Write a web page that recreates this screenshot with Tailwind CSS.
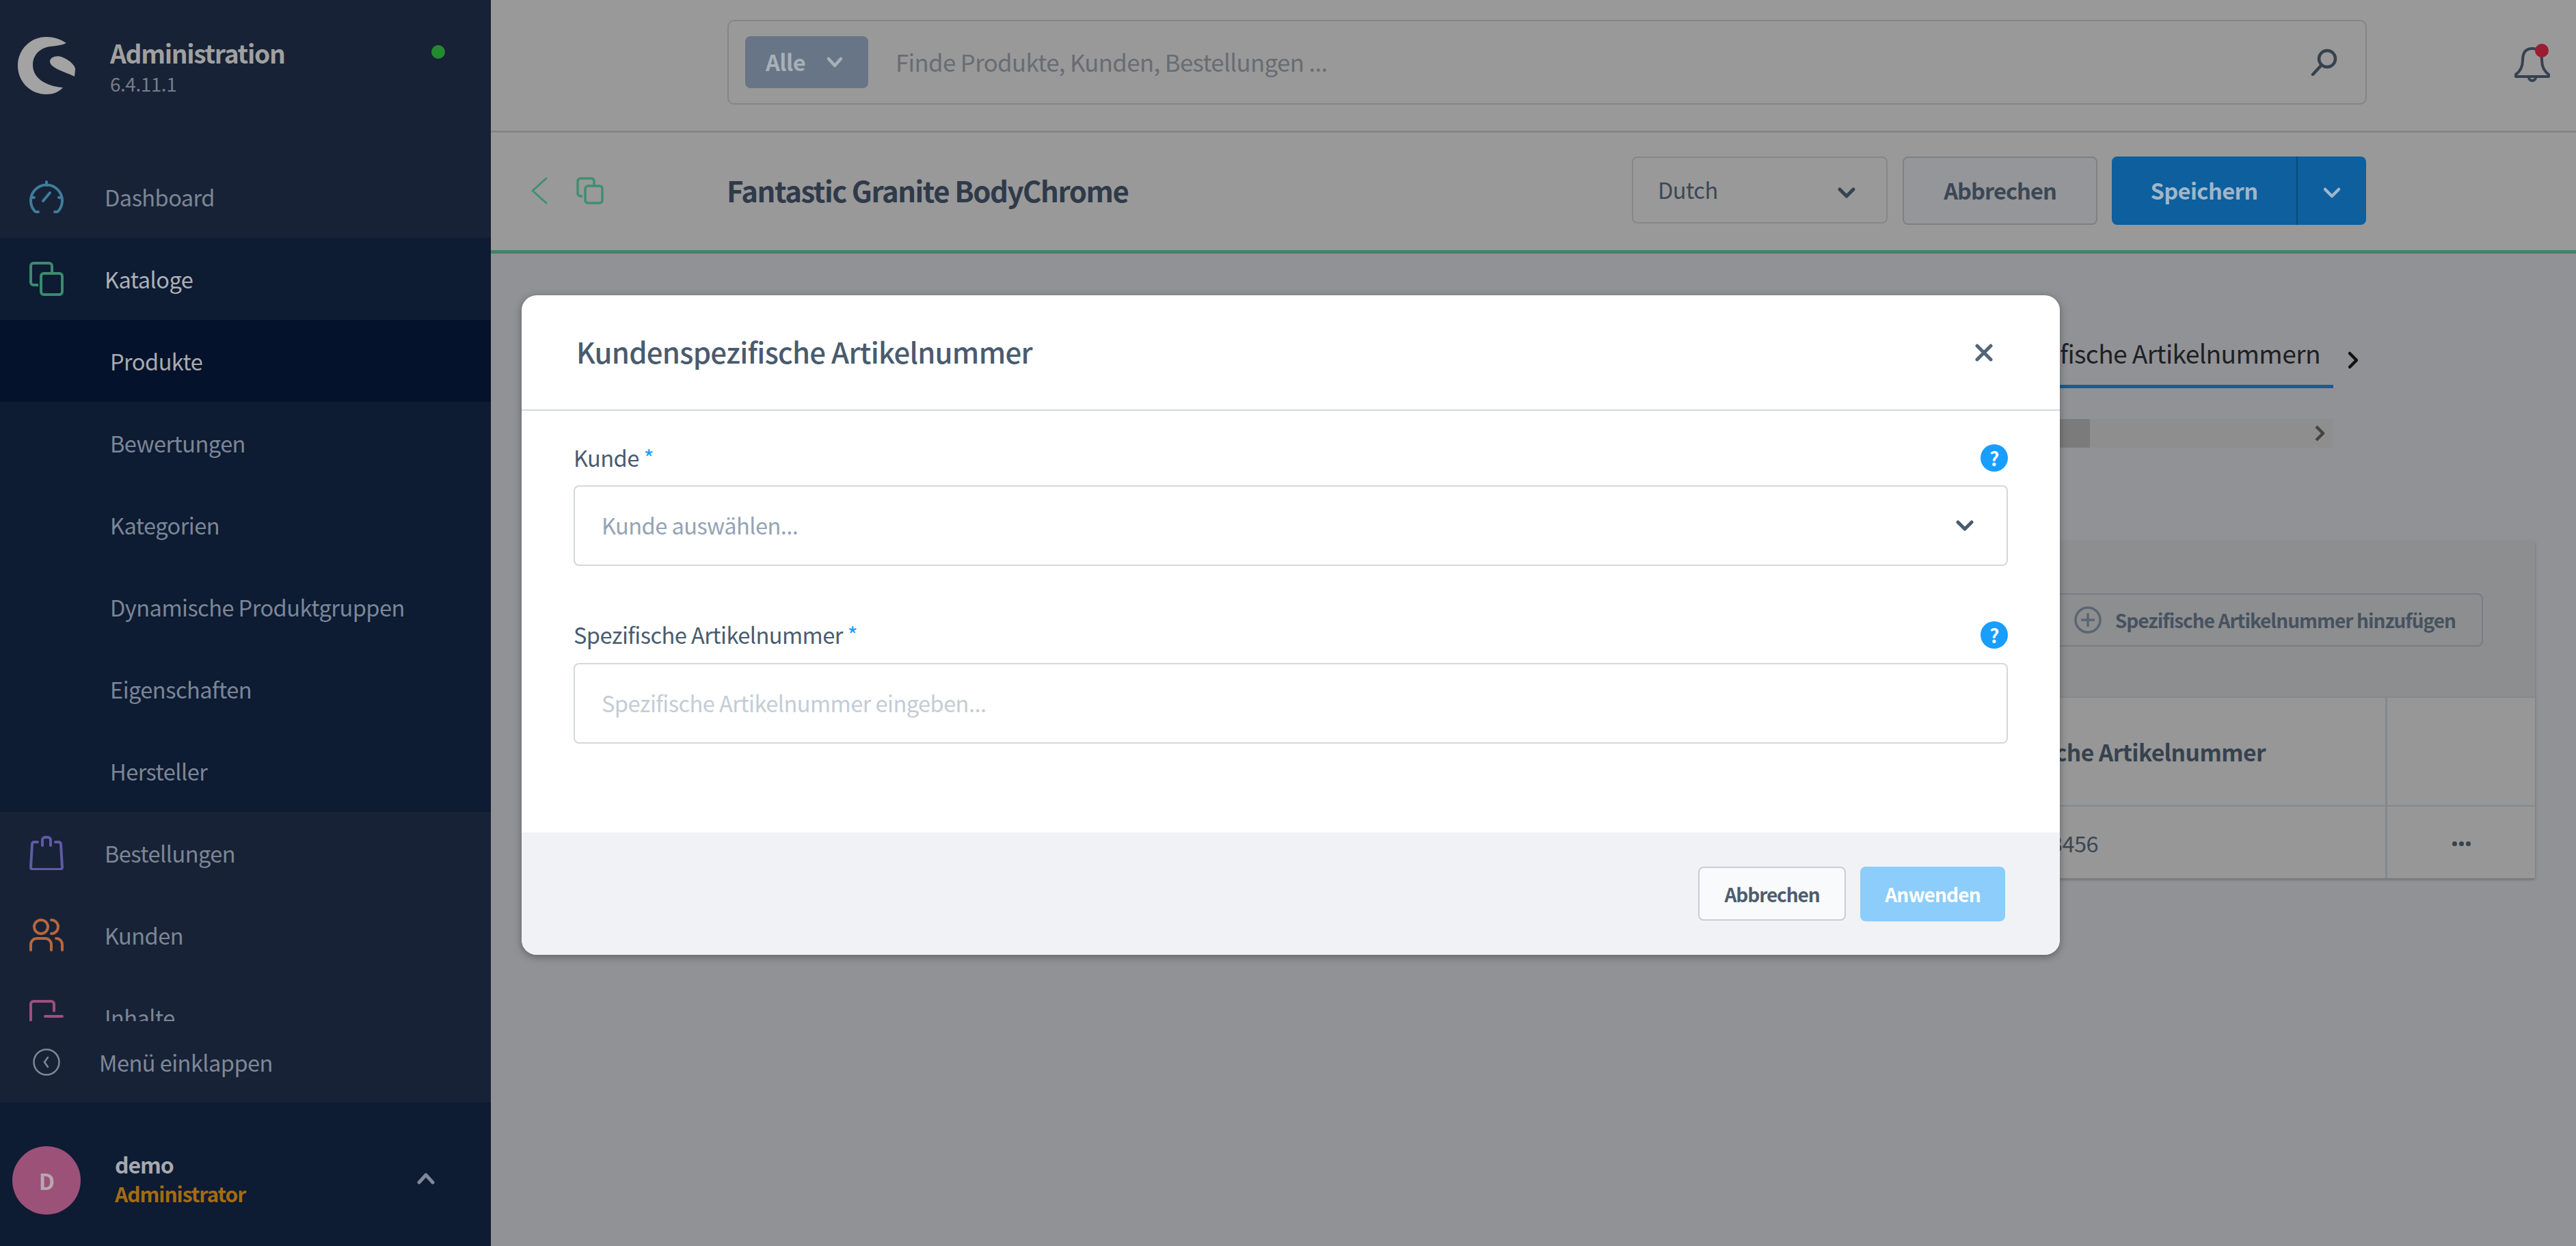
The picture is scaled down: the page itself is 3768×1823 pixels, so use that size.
<!DOCTYPE html>
<html lang="de">
<head>
    <meta charset="UTF-8">
    <meta name="viewport" content="width=device-width, initial-scale=1.0">
    <title>Kundenspezifische Artikelnummer</title>
    <script src="https://cdn.jsdelivr.net/npm/@tailwindcss/browser@4"></script>
</head>
<body class="relative h-[1823px] w-[3768px] overflow-hidden bg-[#919295] font-['Noto_Sans_CJK_SC',sans-serif] text-[32.6px] leading-[40px] [&_*]:tracking-[-0.017em]">
    <div class="flex h-full">
        <!-- Sidebar -->
        <aside class="flex h-full w-[718px] shrink-0 flex-col bg-[#172236]">
            <div class="relative h-[228px] shrink-0">
                <svg class="absolute left-[26px] top-[54px]" width="84" height="84" viewBox="0 0 84 84" fill="#a3a3a3">
                    <path d="M71 9C62 3 52 0 42 0C18 0 0 19 0 42C0 65 18 84 42 84C51 84 60 81 66 74C48 73 22 64 22 41C22 24 36 15 48 14C57 13 65 12 71 9Z"/>
                    <path d="M47 36C47 29 58 26 66 30C78 35 84 43 84 47C84 52 83 55 83 58C72 52 47 46 47 36Z"/>
                </svg>
                <div class="absolute left-[161px] top-[54px] text-[37.2px] font-semibold leading-[46px] tracking-[-0.035em]! text-[#a0a0a0]">Administration</div>
                <div class="absolute left-[161px] top-[104px] text-[28px] leading-[36px] text-[#747d8a]">6.4.11.1</div>
                <span class="absolute left-[631px] top-[66px] h-[20px] w-[20px] rounded-full bg-[#238a2f]"></span>
            </div>

            <nav class="h-[1266px] shrink-0 overflow-hidden text-[#7c8695]">
                <div class="flex h-[120px] items-center">
                    <svg class="ml-[43px] mr-[60px] shrink-0" width="50" height="50" viewBox="0 0 50 50" fill="none" stroke="#3f7d9a" stroke-width="4" stroke-linecap="round"><path d="M13 47H10A3 3 0 0 1 7.500 45.500A23 23 0 1 1 42.500 45.500A3 3 0 0 1 40 47H37"/><path d="M25 3V8M3 26H7M43 26H47"/><path d="M20 31L30 19"/></svg>
                    Dashboard
                </div>
                <div class="flex h-[120px] items-center bg-[#0d1b33] text-[#adb0b5]">
                    <svg class="ml-[43px] mr-[60px] shrink-0" width="50" height="50" viewBox="0 0 50 50" fill="none" stroke="#3c8a6e" stroke-width="4"><rect x="17" y="17" width="31" height="31" rx="4"/><path d="M13 34H6A4 4 0 0 1 2 30V6A4 4 0 0 1 6 2H29A4 4 0 0 1 33 6V15"/></svg>
                    Kataloge
                </div>
                <div class="bg-[#0d1b33]">
                    <div class="flex h-[120px] items-center bg-[#05122b] pl-[161px] text-[#a9abae]">Produkte</div>
                    <div class="flex h-[120px] items-center pl-[161px]">Bewertungen</div>
                    <div class="flex h-[120px] items-center pl-[161px]">Kategorien</div>
                    <div class="flex h-[120px] items-center pl-[161px]">Dynamische Produktgruppen</div>
                    <div class="flex h-[120px] items-center pl-[161px]">Eigenschaften</div>
                    <div class="flex h-[120px] items-center pl-[161px]">Hersteller</div>
                </div>
                <div class="flex h-[120px] items-center">
                    <svg class="ml-[43px] mr-[60px] shrink-0" width="50" height="50" viewBox="0 0 50 50" fill="none" stroke="#5f5ba6" stroke-width="4" stroke-linecap="round"><path d="M12 9H7A3 3 0 0 0 4 12L2 46A3 3 0 0 0 5 49H45A3 3 0 0 0 48 46L46 12A3 3 0 0 0 43 9H38"/><path d="M19 14V6A4 4 0 0 1 23 2H27A4 4 0 0 1 31 6V14"/></svg>
                    Bestellungen
                </div>
                <div class="flex h-[120px] items-center">
                    <svg class="ml-[43px] mr-[60px] shrink-0" width="50" height="50" viewBox="0 0 50 50" fill="none" stroke="#b5673f" stroke-width="4" stroke-linecap="round"><circle cx="17" cy="13" r="10"/><path d="M32 3A10 10 0 0 1 32 23"/><path d="M2 47V39A9 9 0 0 1 11 30H23A9 9 0 0 1 32 39V47"/><path d="M39 30A9 9 0 0 1 48 39V47"/></svg>
                    Kunden
                </div>
                <div class="flex h-[120px] items-center">
                    <svg class="ml-[43px] mr-[60px] shrink-0" width="50" height="50" viewBox="0 0 50 50" fill="none" stroke="#a14d80" stroke-width="4" stroke-linecap="round"><path d="M2 49V6A4 4 0 0 1 6 2H32A4 4 0 0 1 36 6V16"/><path d="M23 24H48"/></svg>
                    Inhalte
                </div>
            </nav>

            <div class="flex h-[119px] shrink-0 items-center text-[#7f8896]">
                <svg class="ml-[48px] mr-[57px] shrink-0" width="40" height="40" viewBox="0 0 40 40" fill="none" stroke="#7f8896" stroke-width="2.500"><circle cx="20" cy="20" r="18.500"/><path d="M22 13L17 20L22 27" stroke-linecap="round"/></svg>
                Menü einklappen
            </div>

            <div class="relative flex-1 bg-[#0d1b33]">
                <div class="absolute left-[18px] top-[64px] flex h-[100px] w-[100px] items-center justify-center rounded-full bg-[#9c5178] font-semibold text-[#b8a6b1]">D</div>
                <div class="absolute left-[168px] top-[70px] text-[32px] font-semibold tracking-[-0.035em]! text-[#a7a9ab]">demo</div>
                <div class="absolute left-[168px] top-[113px] text-[30px] font-semibold tracking-[-0.035em]! text-[#a36c10]">Administrator</div>
                <svg class="absolute left-[610px] top-[102px]" width="26" height="18" viewBox="0 0 26 18" fill="none" stroke="#7f8896" stroke-width="5" stroke-linecap="round" stroke-linejoin="round"><path d="M3 15L13 4L23 15"/></svg>
            </div>
        </aside>

        <!-- Page behind the modal -->
        <main class="min-w-0 flex-1">
            <div class="relative h-[194px] border-b-[3px] border-[#858585] bg-[#999999] pl-[346px] pt-[29px]">
                <div class="flex h-[124px] w-[2398px] items-center rounded-[10px] border-2 border-[#858585] pl-[24px] pr-[40px]">
                    <div class="flex h-[76px] w-[180px] items-center rounded-[8px] bg-[#677587] pb-[2px] pl-[30px] font-semibold text-[#a9afb7]">
                        Alle
                        <svg class="ml-[30px] mt-[2px]" width="26" height="18" viewBox="0 0 26 18" fill="none" stroke="#a9afb7" stroke-width="4.500" stroke-linecap="round" stroke-linejoin="round"><path d="M4 4L13 14L22 4"/></svg>
                    </div>
                    <div class="ml-[40px] flex-1 pb-[2px] text-[34.7px] text-[#686c72]">Finde Produkte, Kunden, Bestellungen ...</div>
                    <svg width="40" height="40" viewBox="0 0 40 40" fill="none" stroke="#36424f" stroke-width="4.500" stroke-linecap="round"><circle cx="24" cy="15" r="12"/><path d="M15 25L3 38"/></svg>
                </div>
                <svg class="absolute left-[2960px] top-[66px]" width="52" height="54" viewBox="0 0 52 54" fill="none" stroke="#36424f" stroke-width="4" stroke-linejoin="round"><path d="M26 5C16 5 12 12 12 22C12 32 9 38 2 43V46H50V43C43 38 40 32 40 22C40 12 36 5 26 5Z"/><path d="M21 47A5 5 0 0 0 31 47"/></svg>
                <span class="absolute left-[2990px] top-[64px] h-[20px] w-[20px] rounded-full bg-[#9c1c32]"></span>
            </div>

            <div class="relative flex h-[177px] items-center border-b-[5px] border-[#3f8468] bg-[#999999] pb-[2px]">
                <svg class="ml-[59px] shrink-0" width="24" height="40" viewBox="0 0 24 40" fill="none" stroke="#3f8f72" stroke-width="3" stroke-linecap="round" stroke-linejoin="round"><path d="M22 2L2 20L22 38"/></svg>
                <svg class="ml-[42px] shrink-0" width="40" height="40" viewBox="0 0 40 40" fill="none" stroke="#3f8f72" stroke-width="3.500"><rect x="13" y="13" width="25" height="25" rx="4"/><path d="M9 28H6A4 4 0 0 1 2 24V6A4 4 0 0 1 6 2H22A4 4 0 0 1 26 6V12"/></svg>
                <div class="ml-[180px] pb-[2px] text-[41.9px] font-semibold leading-[52px] tracking-[-0.035em]! text-[#2f3a4a]">Fantastic Granite BodyChrome</div>
                <div class="absolute left-[1669px] top-[35px] flex h-[98px] w-[374px] items-center rounded-[8px] border-2 border-[#878787] pb-[2px] pl-[36px] text-[#3c4754]">
                    Dutch
                    <svg class="absolute left-[298px] top-[42px]" width="28" height="18" viewBox="0 0 28 18" fill="none" stroke="#36424f" stroke-width="5" stroke-linecap="round" stroke-linejoin="round"><path d="M4 4L14 14L24 4"/></svg>
                </div>
                <div class="absolute left-[2065px] top-[35px] flex h-[100px] w-[285px] items-center justify-center rounded-[8px] border-2 border-[#7f8082] bg-[#95969a] pb-[2px] font-semibold tracking-[-0.03em]! text-[#3c4754]">Abbrechen</div>
                <div class="absolute left-[2371px] top-[35px] flex h-[100px] w-[372px] overflow-hidden rounded-[8px] bg-[#0d5f9e] font-semibold text-[#a0b6c9]">
                    <div class="flex w-[272px] items-center justify-center border-r-2 border-[#0a4a7c] pb-[2px]">Speichern</div>
                    <div class="flex flex-1 items-center justify-center pt-[6px]">
                        <svg width="28" height="18" viewBox="0 0 28 18" fill="none" stroke="#a0b6c9" stroke-width="4.500" stroke-linecap="round" stroke-linejoin="round"><path d="M4 4L14 14L24 4"/></svg>
                    </div>
                </div>
            </div>

            <div class="flex flex-col items-end">
                <div class="mr-[319px] mt-[122px] flex items-center">
                    <div class="h-[75px] w-[1000px] border-b-[5px] border-[#155d96] pr-[19px] text-right text-[37.2px] leading-[46px] text-[#1e2024]">Spezifische Artikelnummern</div>
                    <svg class="ml-[22px] mt-[-8px]" width="14" height="26" viewBox="0 0 14 26" fill="none" stroke="#111111" stroke-width="4.500" stroke-linecap="round" stroke-linejoin="round"><path d="M2 3L12 13L2 23"/></svg>
                </div>
                <div class="mr-[355px] mt-[45px] flex h-[42px] w-[1000px] items-center bg-[#8e8e8e]">
                    <div class="h-full w-[644px] bg-[#7b7b7b]"></div>
                    <svg class="ml-auto mr-[12px]" width="16" height="24" viewBox="0 0 16 24" fill="none" stroke="#444444" stroke-width="4.500" stroke-linejoin="round"><path d="M3 2L13 12L3 22"/></svg>
                </div>

                <div class="mr-[60px] mt-[137px] w-[1400px] shadow-[0_2px_4px_rgba(0,0,0,0.25)]">
                    <div class="flex h-[227px] justify-end bg-[#8d8e90] pr-[76px] pt-[76px]">
                        <div class="flex h-[78px] w-[1000px] items-center justify-end rounded-[8px] border-2 border-[#787c81] pr-[38px] text-[28px] font-semibold tracking-[-0.035em]! text-[#46525f]">
                            <svg class="mr-[20px]" width="40" height="40" viewBox="0 0 40 40" fill="none" stroke="#5a6672" stroke-width="3.500"><circle cx="20" cy="20" r="18"/><path d="M20 10V30M10 20H30"/></svg>
                            Spezifische Artikelnummer hinzufügen
                        </div>
                    </div>
                    <div class="flex h-[159px] border-t-2 border-[#84888c] bg-[#979797]">
                        <div class="flex flex-1 items-center justify-end pr-[175px] text-[33.6px] font-bold text-[#36424f]">Spezifische Artikelnummer</div>
                        <div class="w-[219px] border-l-[3px] border-[#84888c]"></div>
                    </div>
                    <div class="flex h-[107px] border-t-2 border-[#84888c] bg-[#979797]">
                        <div class="flex flex-1 items-center justify-end pr-[420px] text-[#3c4754]">123456</div>
                        <div class="flex w-[219px] items-center justify-center gap-[3px] border-l-[3px] border-[#84888c] pt-[4px]">
                            <span class="h-[7px] w-[7px] rounded-full bg-[#36424f]"></span>
                            <span class="h-[7px] w-[7px] rounded-full bg-[#36424f]"></span>
                            <span class="h-[7px] w-[7px] rounded-full bg-[#36424f]"></span>
                        </div>
                    </div>
                </div>
            </div>
        </main>
    </div>

    <!-- Modal -->
    <div class="absolute left-[763px] top-[432px] flex h-[965px] w-[2250px] flex-col overflow-hidden rounded-[22px] bg-white shadow-[0_3px_12px_rgba(0,0,0,0.35)]">
        <div class="flex h-[167px] shrink-0 items-center justify-between pl-[80px] pr-[98px]">
            <div class="pb-[3px] text-[41.9px] font-medium leading-[52px] text-[#4a5b6e]">Kundenspezifische Artikelnummer</div>
            <svg width="26" height="26" viewBox="0 0 26 26" fill="none" stroke="#52667a" stroke-width="5" stroke-linecap="round"><path d="M3 3L23 23M23 3L3 23"/></svg>
        </div>
        <div class="flex-1 border-t-2 border-[#d1d9e0] px-[76px] pt-[49px] text-[#4a5b6e]">
            <div class="flex h-[40px] items-center justify-between">
                <div class="pb-[2px]">Kunde <span class="text-[#189eff]">*</span></div>
                <span class="flex h-[40px] w-[40px] items-center justify-center rounded-full bg-[#189eff] text-[28px] font-bold text-white">?</span>
            </div>
            <div class="mt-[20px] flex h-[118px] items-center justify-between rounded-[8px] border-2 border-[#d1d9e0] pl-[39px] pr-[48px] text-[#94a3b4]">
                <span class="pb-[2px]">Kunde auswählen...</span>
                <svg width="26" height="18" viewBox="0 0 26 18" fill="none" stroke="#4a5b6e" stroke-width="5" stroke-linecap="round" stroke-linejoin="round"><path d="M3 4L13 14L23 4"/></svg>
            </div>
            <div class="mt-[81px] flex h-[40px] items-center justify-between">
                <div class="pb-[2px]">Spezifische Artikelnummer <span class="text-[#189eff]">*</span></div>
                <span class="flex h-[40px] w-[40px] items-center justify-center rounded-full bg-[#189eff] text-[28px] font-bold text-white">?</span>
            </div>
            <div class="mt-[21px] flex h-[118px] items-center rounded-[8px] border-2 border-[#d1d9e0] pb-[2px] pl-[39px] text-[#c4ccd5]">Spezifische Artikelnummer eingeben...</div>
        </div>
        <div class="flex h-[179px] shrink-0 items-start justify-end gap-[21px] bg-[#f0f2f5] pr-[80px] pt-[50px] text-[28px] font-semibold">
            <div class="flex h-[79px] w-[216px] items-center justify-center rounded-[8px] border-2 border-[#c8ced6] bg-[#f9fafb] tracking-[-0.04em]! text-[#4f5d6c]">Abbrechen</div>
            <div class="flex h-[80px] w-[212px] items-center justify-center rounded-[8px] bg-[#8ccdfc] tracking-[-0.03em]! text-white">Anwenden</div>
        </div>
    </div>
</body>
</html>
